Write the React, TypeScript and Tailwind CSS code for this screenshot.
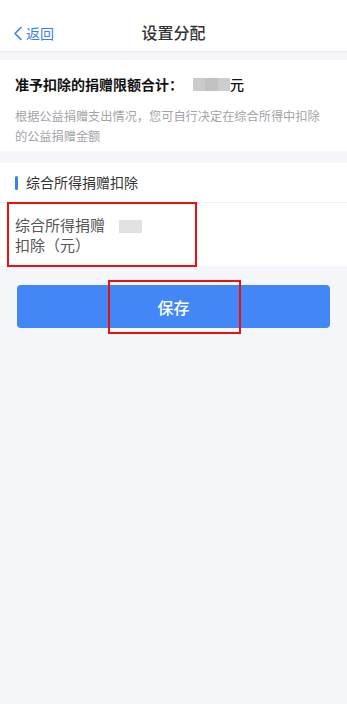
import React from 'react';

const font = { fontFamily: '"Noto Sans CJK SC", "Noto Sans", sans-serif' };

const BackIcon: React.FC = () => (
  <svg width="10" height="15" viewBox="0 0 10 15" fill="none">
    <path d="M8 1.5 L2 7.5 L8 13.5" stroke="#3d7ff0" strokeWidth="1.6" strokeLinecap="round" strokeLinejoin="round" />
  </svg>
);

const App: React.FC = () => {
  return (
    <div className="min-h-[704px] bg-[#f5f6fa] text-[#333]" style={font}>
      <header className="h-[52px] bg-white border-b border-[#ececf0] relative flex items-center justify-center">
        <button className="absolute left-[13px] top-[23px] flex items-center gap-[3px] text-[14px] leading-[20px] text-[#3d7ff0]">
          <BackIcon />
          <span>返回</span>
        </button>
        <h1 className="text-[16px] font-medium text-[#333] pt-[12px]">设置分配</h1>
      </header>

      <section className="mt-[8px] bg-white pl-[15px] pr-[25px] pt-[14px] pb-[5px]">
        <div className="flex items-center text-[14px] leading-[20px] font-bold text-[#111]">
          <span>准予扣除的捐赠限额合计：</span>
          <span className="ml-[10px] inline-flex h-[13px] w-[37px]">
            <span className="flex-1 bg-[#cbcbcb]" />
            <span className="flex-1 bg-[#c2c2c2]" />
            <span className="flex-1 bg-[#cdcdcd]" />
          </span>
          <span className="font-medium">元</span>
        </div>
        <p className="mt-[12px] text-[12.2px] leading-[20px] text-[#a3a3a8]">
          根据公益捐赠支出情况，您可自行决定在综合所得中扣除的公益捐赠金额
        </p>
      </section>

      <section className="mt-[12px] bg-white">
        <div className="h-[40px] flex items-center px-[15px] border-b border-[#f0f0f2]">
          <span className="w-[3px] h-[14px] rounded-full bg-[#3d7ff0]" />
          <span className="ml-[8px] text-[14px] text-[#333]">综合所得捐赠扣除</span>
        </div>
        <div className="relative h-[63px] flex items-center px-[15px]">
          <div className="w-[92px] text-[15px] leading-[20px] text-[#555]">
            综合所得捐赠扣除（元）
          </div>
          <span className="ml-[12px] -mt-[16px] w-[23px] h-[13px] bg-[#e1e1e1]" />
          <div className="absolute left-[7px] top-[-1px] w-[190px] h-[65px] border-2 border-[#f00f0f]" />
        </div>
      </section>

      <div className="px-[17px] mt-[19px]">
        <div className="relative">
          <button className="w-full h-[43px] rounded-[4px] bg-[#4287f5] text-white text-[16px] font-medium">
            保存
          </button>
          <div className="absolute left-[91px] top-[-5px] w-[133px] h-[54px] border-2 border-[#f00f0f]" />
        </div>
      </div>
    </div>
  );
};

export default App;
